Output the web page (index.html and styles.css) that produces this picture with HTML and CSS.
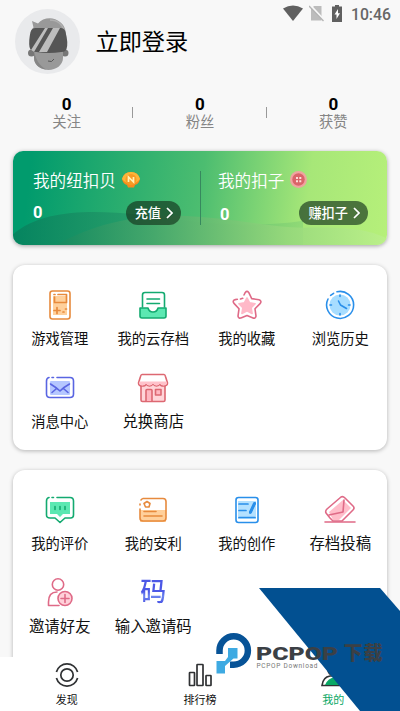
FILE: index.html
```html
<!DOCTYPE html>
<html lang="zh-CN">
<head>
<meta charset="utf-8">
<title>我的</title>
<link rel="stylesheet" href="styles.css">
</head>
<body>
<div class="app">
  <header class="profile">
    <svg class="avatar" viewBox="0 0 65 65">
      <circle cx="32.5" cy="32.5" r="32.5" fill="#e9eaec"/>
      <circle cx="16.500" cy="44" r="3.500" fill="#777"/><circle cx="50" cy="44" r="3.500" fill="#777"/>
      <path d="M19 40h29v9c0 7-7 12-14.500 12S19 56 19 49z" fill="#999"/>
      <path d="M19 42c2 9 5 14 12 18.500-7-1-12-5-12-12z" fill="#858585"/>
      <path d="M16 24c0-3 1-4 2.500-5.500L17 12l6 2.500C28 8 39 7.500 45 13c5 4 6 8 6 15H16z" fill="#999"/>
      <path d="M35 11c8 0 13 5 14 11" fill="none" stroke="#afafaf" stroke-width="1.500"/>
      <path d="M15.500 23q1.500-4 5-4h25q4 0 5 4 3 11 1 17-1 3-5 3-13 2-25 0-6 0-7-5-1-6 1-15z" fill="#555"/>
      <path d="M30 19h3L19 43l-3-2zM38 19h7L32 43h-8z" fill="#bdbdbd"/>
      <path d="M33 52q4 2 6-2" fill="none" stroke="#555" stroke-width="1"/>
    </svg>
    <h1 class="login">立即登录</h1>
    <div class="status">
      <svg width="20" height="17" viewBox="0 0 20 17"><path d="M0 3.500Q10-2.500 20 3.500L10 16z" fill="#606060"/></svg>
      <svg width="16" height="17" viewBox="0 0 16 17"><path d="M5 1h7.500v14.500H2V4z" fill="#bcbcbc"/><path d="M1 0l14 15" stroke="#f8f8f8" stroke-width="2"/><path d="M0 1l14.500 15" stroke="#b4b4b4" stroke-width="1.300"/></svg>
      <svg width="12" height="17" viewBox="0 0 12 17"><path d="M4 0h4v1.500h3V17H1V1.500h3z" fill="#606060"/><path d="M7 4L3.500 9.500h2V14L9 8.300H7z" fill="#fff"/></svg>
      <span class="time">10:46</span>
    </div>
  </header>

  <section class="stats">
    <div class="stat"><b>0</b><span>关注</span></div>
    <div class="stat"><b>0</b><span>粉丝</span></div>
    <div class="stat"><b>0</b><span>获赞</span></div>
  </section>

  <section class="wallet">
    <svg class="hills" viewBox="0 0 374 95" preserveAspectRatio="none">
      <defs>
        <linearGradient id="h1"><stop offset="0" stop-color="#087d5b"/><stop offset=".45" stop-color="#259a69"/><stop offset=".8" stop-color="#6cc470"/><stop offset="1" stop-color="#8ad676"/></linearGradient>
        <linearGradient id="h2"><stop offset="0" stop-color="#15895f"/><stop offset=".3" stop-color="#4aa96c"/><stop offset=".7" stop-color="#98d97c"/><stop offset="1" stop-color="#bcf08c"/></linearGradient>
      </defs>
      <path d="M0 84C30 57 85 60 125 64S225 80 290 70v25H0z" fill="url(#h1)" opacity=".75"/>
      <path d="M42 95C85 71 130 62 185 66s75 12 113 11 61 3 76 11v7z" fill="url(#h2)" opacity=".85"/>
    </svg>
    <div class="account">
      <div class="account-name">我的纽扣贝
        <svg width="18" height="16" viewBox="0 0 18 16"><path d="M0 7Q2 0 9 0t9 7q-1 5-5 6l-1 2.500H6L5 13Q1 12 0 7z" fill="#f98a1c"/><path d="M0 7Q2 0 9 0t9 7q-4 5-9 5T0 7z" fill="#fbb53a"/><circle cx="9" cy="7.500" r="5.500" fill="#f79b24"/><path d="M6.500 10V5l5 5V5" fill="none" stroke="#fff2b5" stroke-width="1.700"/></svg>
      </div>
      <div class="account-row"><b>0</b><span class="pill">充值<svg width="7" height="12" viewBox="0 0 7 12"><path d="M1 1l5 5-5 5"/></svg></span></div>
    </div>
    <div class="account second">
      <div class="account-name">我的扣子
        <svg width="17" height="17" viewBox="0 0 17 17"><circle cx="8.500" cy="8.500" r="8.500" fill="#efa3a0"/><circle cx="8.500" cy="8.500" r="6.200" fill="#da6469"/><path d="M6 6h2v2H6zM9.300 6h2v2h-2zM6 9.300h2v2H6zM9.300 9.300h2v2h-2z" fill="#ffdeda"/></svg>
      </div>
      <div class="account-row"><b>0</b><span class="pill">赚扣子<svg width="7" height="12" viewBox="0 0 7 12"><path d="M1 1l5 5-5 5"/></svg></span></div>
    </div>
  </section>

  <section class="card menu">
    <div class="item orange">
      <svg viewBox="0 0 32 32"><rect x="9" y="7" width="14" height="19" fill="#ffd09b" stroke="none"/><rect x="6" y="2" width="20" height="28" rx="2.500"/><path d="M14 5.500h8.500v8h-12V8M10 5.500h1M10 21.500h6M13 18.500v6M19 23h1M21.500 20h1" stroke-width="1.700"/></svg>
      <span>游戏管理</span></div>
    <div class="item green">
      <svg viewBox="0 0 32 32"><path d="M3 19h8q1 4 5 4t5-4h8v8q0 2-2 2H5q-2 0-2-2z" fill="#5ce8b2"/><path d="M5.500 18V6q0-2.500 2.500-2.500h17q2.500 0 2.500 2.500v12M10 10h12.500M10 14.500h12.500"/></svg>
      <span>我的云存档</span></div>
    <div class="item pink">
      <svg viewBox="0 0 32 32"><path d="M16 9l2.600 4.800 5.500.9-4 4 1 5.800L16 21.900l-5.100 2.600 1-5.800-4-4 5.500-.9z" fill="#ffb9c8" stroke="#ffb9c8"/><path d="M13 6l1.300-2.600q1.700-2 3.400 0l3 6.200 7.300 1.200q3 1 1.300 3.600L24 19.800l1 7.400q-.5 3-3.500 1.600L16 26.500l-5.500 2.300Q7.500 30 7 27.200l1-7.400-5-5.400q-2-3 1.300-3.800l2-.3M9.500 10l2.200-.7"/></svg>
      <span>我的收藏</span></div>
    <div class="item blue">
      <svg viewBox="0 0 32 32"><circle cx="16" cy="16" r="10.500" fill="#a7ddff" stroke="none"/><path d="M13 2.800A13.500 13.500 0 1 1 4 10M6.600 6.300l3-2M14.500 12l2 4 6 3.500M16 6v1.500M16 24.500V26M6 16h1.500M24.500 16H26"/></svg>
      <span>浏览历史</span></div>
    <div class="item violet">
      <svg viewBox="0 0 32 32"><rect x="6" y="9" width="20" height="14" rx="1" fill="#b5c7ff" stroke="none"/><path d="M13 5.500h13q3.500 0 3.500 3.500v13q0 3.500-3.500 3.500H6q-3.500 0-3.500-3.500V9q0-3 2.500-3.500M8 5.500h1.500M6.500 12q5 3 9.500 7 4-4 9.500-7M8 20.500l4-3.500M24 20.500L20 17"/></svg>
      <span>消息中心</span></div>
    <div class="item red large">
      <svg viewBox="0 0 32 32"><path d="M4 14v14q0 1.500 1.500 1.500h21Q28 29.500 28 28V14" fill="#ffd5d9"/><path d="M5 2.500h22q1 0 1.500 2l2 6.500q0 3-4 3-3 0-3.500-2-1 2-3.500 2T16 12q-1 2-3.500 2T9 12q-.5 2-3.500 2-4 0-4-3l2-6.500q.5-2 1.500-2z" fill="#fff" /><path d="M2.500 9.500h27q1 4-3 4-3 0-3.500-2-1 2-3.500 2t-3.500-2q-1 2-3.500 2t-3.500-2q-.5 2-3.500 2-4 0-3-4z" fill="#ffc2ca" stroke="none"/><path d="M9 29V18.500q0-1 1-1h4q1 0 1 1V29M18.500 17.500H24v5.500h-5.500z" fill="#ffb7c1"/></svg>
      <span>兑换商店</span></div>
  </section>

  <section class="card menu feedback">
    <div class="item green">
      <svg viewBox="0 0 32 32"><path d="M6 8h20v12h-7l-3 3-3-3H6z" fill="#5ce8b2" stroke="none"/><path d="M13 3.500h13q3.500 0 3.500 3.500v14q0 3-3 3H21l-5 4.500-5-4.500H6q-3.500 0-3.500-3V7q0-3 2.500-3.500M8 3.500h1.500M11 12.500v3M16 12.500v3M21 12.500v3"/></svg>
      <span>我的评价</span></div>
    <div class="item orange">
      <svg viewBox="0 0 32 32"><path d="M3 16h26v12H3z" fill="#ffd09b" stroke="none"/><path d="M6 4.500h20q3 0 3 3V24q0 3-3 3H6q-3 0-3-3V15M3 10v1M4 6l1-1M7 17.500h12M7 22h18M10 7.500l3 2-1 3.500H8.500l-1.500-3.500z"/></svg>
      <span>我的安利</span></div>
    <div class="item blue">
      <svg viewBox="0 0 32 32"><rect x="7" y="7" width="18" height="18" fill="#b4e1ff" stroke="none"/><rect x="5" y="3.500" width="22" height="25" rx="2.500"/><path d="M8 10h9M8 16.500h7M8 23.500h16M19 19l5-10" stroke-width="1.700"/><path d="M19.500 18l4-8.500" stroke-width="3"/></svg>
      <span>我的创作</span></div>
    <div class="item pink large">
      <svg viewBox="0 0 32 32"><path d="M6 24l-4-5q-1-2 1-4L17 3q2-1 4 1l8 8q2 2 0 4L18 27H9z" fill="#fff"/><path d="M7 22l-2-4L19 6l8 8-12 12H9z" fill="#ffbdca" stroke="none"/><path d="M20 6l-1 12-14 3M1 28h30"/></svg>
      <span>存档投稿</span></div>
    <div class="item pink large">
      <svg viewBox="0 0 32 32"><circle cx="14" cy="7.500" r="5.700"/><path d="M13 15Q4.500 15 4.500 25v3.500H15"/><circle cx="21" cy="21.500" r="7" fill="#ffd0d9"/><path d="M21 17.500v8M17 21.500h8"/></svg>
      <span>邀请好友</span></div>
    <div class="item large">
      <i class="code">码</i>
      <span>输入邀请码</span></div>
  </section>

  <nav class="tabs">
    <div class="tab"><svg viewBox="0 0 24 24"><circle cx="12" cy="12" r="6.200"/><path d="M1.400 9a11 11 0 0 1 21.200 0M1.400 15a11 11 0 0 0 21.200 0"/></svg><span>发现</span></div>
    <div class="tab"><svg viewBox="0 0 24 24"><rect x="1.500" y="9.500" width="5" height="13" rx=".5"/><rect x="9" y="1.500" width="6" height="21" rx=".5"/><rect x="18" y="12.500" width="5" height="10" rx=".5"/></svg><span>排行榜</span></div>
    <div class="tab active"><svg viewBox="0 0 24 24"><circle cx="12" cy="7" r="5"/><path d="M1 22.500q1-8.500 8-9.500h6q7 1 8 9.500z" fill="#fff"/><path d="M4 22q3-7 10-8l8 8z" fill="#0aa865" stroke="none"/></svg><span>我的</span></div>
  </nav>

  <svg class="watermark" viewBox="0 0 190 123">
    <path d="M49 0h121l20 23v100h-40z" fill="#025091"/>
    <path d="M9.500 66V62.500a14.200 14.200 0 1 1 14.200 14.200H20" fill="none" stroke="#075397" stroke-width="6.500"/>
    <path d="M18 60h9.500v10.500h-4L15 78v7.500H6.500V73H15l3-4z" fill="#3eaae2"/>
    <text class="brand" x="46" y="71.500" textLength="82" lengthAdjust="spacingAndGlyphs">PCPOP</text>
    <text class="brand-cn" x="133.500" y="72" textLength="39">下载</text>
    <text class="brand-sub" x="46.500" y="80" textLength="61">PCPOP Download</text>
  </svg>
</div>
</body>
</html>
```
FILE: styles.css
```css
* { box-sizing: border-box; }
body {
  margin: 0;
  background: #f8f8f8;
  color: #111;
  font-family: Roboto, "Noto Sans CJK SC", sans-serif;
}
.app {
  position: relative;
  display: flex;
  flex-direction: column;
  width: 400px;
  height: 711px;
  overflow: hidden;
}
svg { display: block; flex: none; }

.profile {
  display: flex;
  flex: none;
  height: 94px;
  padding: 5px 9px 0 15px;
}
.avatar { width: 65px; height: 65px; margin-top: 4px; }
.login {
  margin: 20px 0 0 15.500px;
  font-size: 23.200px;
  font-weight: 400;
  line-height: 34px;
  color: #000;
}
.status {
  display: flex;
  align-items: center;
  height: 17px;
  margin-left: auto;
  gap: 6px;
}
.time { margin: 2px 0 0 2px; font-size: 15.800px; font-weight: 500; color: #666; }

.stats { display: flex; flex: none; height: 56.500px; }
.stat {
  position: relative;
  flex: 1;
  display: flex;
  flex-direction: column;
  align-items: center;
}
.stat + .stat::before {
  content: "";
  position: absolute;
  left: -1px;
  top: 13px;
  width: 1px;
  height: 11px;
  background: #999;
}
.stat b { font-size: 17px; line-height: 20px; color: #000; }
.stat span { font-size: 14.300px; line-height: 16px; color: #858585; }

.wallet {
  position: relative;
  display: flex;
  flex: none;
  height: 94.500px;
  margin: 0 13px;
  border-radius: 10px;
  overflow: hidden;
  background: linear-gradient(97deg, #019b6d 5%, #4cbd70 50%, #a7e778 78%, #b6f07a);
  box-shadow: 0 1px 4px rgba(0, 0, 0, .35);
  color: #fff;
}
.hills { position: absolute; inset: 0; width: 100%; height: 100%; }
.account { position: relative; width: 187px; padding: 17px 19px 0 20px; }
.account.second { padding-left: 18px; }
.account.second::before {
  content: "";
  position: absolute;
  left: 0;
  top: 20px;
  width: 1px;
  height: 54px;
  background: #37885e;
}
.account-name {
  display: flex;
  align-items: center;
  gap: 6px;
  height: 24px;
  font-size: 16.600px;
  font-weight: 350;
}
.account-row {
  display: flex;
  align-items: center;
  justify-content: space-between;
  height: 24px;
  margin-top: 9px;
}
.account-row b { font-size: 16.500px; }
.second .account-row b { padding: 4px 0 0 2px; }
.pill {
  display: flex;
  align-items: center;
  gap: 5px;
  height: 24px;
  padding: 0 8px 0 9px;
  border-radius: 12px;
  background: rgba(20, 50, 28, .65);
  font-size: 13.200px;
  font-weight: 500;
}
.pill svg { fill: none; stroke: #fff; stroke-width: 1.700; }

.card {
  flex: none;
  height: 185px;
  margin: 20px 13px 0;
  border-radius: 12px;
  background: #fff;
  box-shadow: 0 1px 4px rgba(0, 0, 0, .28);
}
.menu {
  display: grid;
  grid-template-columns: repeat(4, 1fr);
  grid-auto-rows: 82.500px;
  padding-top: 24px;
}
.feedback { height: 210px; }
.item {
  display: flex;
  flex-direction: column;
  align-items: center;
  white-space: nowrap;
}
.item svg {
  width: 32px;
  height: 32px;
  fill: none;
  stroke: currentColor;
  stroke-width: 1.600;
  stroke-linecap: round;
  stroke-linejoin: round;
}
.item span { margin-top: 8px; font-size: 14.300px; line-height: 20px; color: #111; }
.item.large span { font-size: 15.400px; }
.orange { color: #e78a3d; }
.green { color: #13aa70; }
.pink { color: #df6a87; }
.blue { color: #298fea; }
.violet { color: #5965e2; }
.red { color: #dd6872; }
.code {
  height: 32px;
  font-size: 26px;
  font-style: normal;
  font-weight: 500;
  line-height: 30px;
  background: linear-gradient(#4c58e6 45%, #6d86f0 60%, #4c58e6 80%);
  -webkit-background-clip: text;
  background-clip: text;
  color: transparent;
}

.tabs {
  position: absolute;
  inset: auto 0 0;
  display: flex;
  height: 54px;
  background: #fff;
}
.tab {
  flex: 1;
  display: flex;
  flex-direction: column;
  align-items: center;
  padding-top: 6px;
}
.tab svg {
  width: 24px;
  height: 24px;
  fill: none;
  stroke: #303234;
  stroke-width: 1.700;
}
.tab span { margin-top: 6px; font-size: 11px; line-height: 16px; }
.tab.active span { color: #0aa865; }

.watermark {
  position: absolute;
  right: 0;
  bottom: 0;
  width: 190px;
  height: 123px;
}
.brand { font: 900 17.500px Roboto, sans-serif; fill: #3b4045; }
.brand-cn { font: 900 19px "Noto Sans CJK SC", sans-serif; fill: #3b4045; }
.brand-sub { font: 6.500px Roboto, sans-serif; fill: #777; }
```
